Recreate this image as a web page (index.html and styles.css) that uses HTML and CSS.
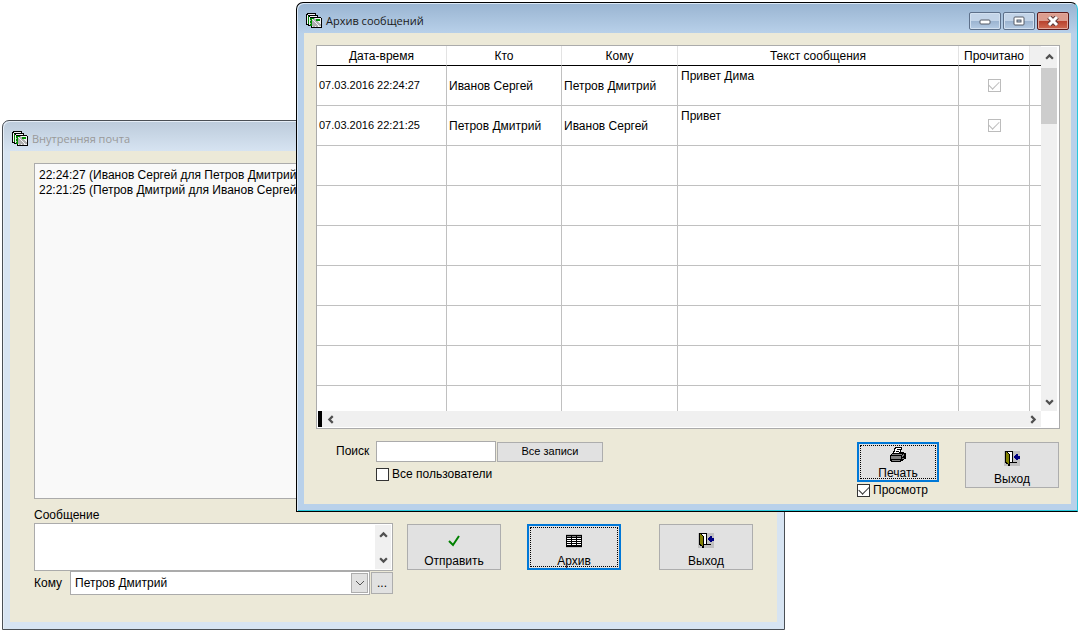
FILE: index.html
```html
<!DOCTYPE html>
<html lang="ru">
<head>
    <meta charset="UTF-8">
    <meta name="viewport" content="width=device-width, initial-scale=1.0">
    <title>Внутренняя почта</title>
    <link rel="stylesheet" href="styles.css">
</head>
<body>
    <!-- Общие иконки -->
    <svg class="sprite" aria-hidden="true">
        <symbol id="i-mail" viewBox="0 0 16 16">
            <path d="M1 0H10V2H12V4H15V5H16V15H5V13H2V12H0V1H1Z" fill="#000"/>
            <path d="M1 2H2V11H1ZM2 1H9V2H2ZM3 4H4V12H3ZM4 3H11V4H4Z" fill="#f4f4f4"/>
            <path d="M2 3H3V11H2ZM4 5H5V13H4Z" fill="#008000"/>
            <path d="M5 5H15V14H6V13H5Z" fill="#f4f4f4"/>
            <path d="M5 7L12 14M8 6L15 13M5 10L9 14M12 10L15 13" stroke="#b0b0b0" stroke-width="2" fill="none"/>
            <path d="M10 6H14V8H10ZM5 5H8V6H5ZM5 6H6V13H5Z" fill="#009000"/>
        </symbol>
        <symbol id="i-exit" viewBox="0 0 16 15">
            <path d="M0 0H16V15H0Z" fill="#c0c0c0"/>
            <path d="M1 0H9V11H13V12H6V15H4V13H2V12H1Z" fill="#000"/>
            <path d="M2 1H3V2H4V3H5V13H4V12H3V11H2Z" fill="#808000"/>
            <path d="M4 1H8V11H6V3H5V2H4Z" fill="#fff"/>
            <path d="M10 5H11V4H12V3H14V5H16V8H14V9H12V8H11V7H10Z" fill="#000080"/>
        </symbol>
        <symbol id="i-printer" viewBox="0 0 18 16">
            <path d="M6 0H13V1L12 5H15V6H17V12H15V13H14V14H12V15H2V14H1V8H2V7H3V6H4Z" fill="#000"/>
            <path d="M7 1H12L10 6H5Z" fill="#fff"/>
            <path d="M8 2H11V3H8ZM7 4H10V5H7Z" fill="#000"/>
            <path d="M3 7H13V8H3ZM2 9H12V12H2Z" fill="#808080"/>
            <path d="M13 8H14V7H15V9H14V10H13ZM13 11H15V12H13ZM3 13H11V14H3Z" fill="#808080"/>
        </symbol>
        <symbol id="i-table" viewBox="0 0 16 14">
            <path d="M0 0H16V14H0Z" fill="#c0c0c0"/>
            <path d="M0 1H16V13H0Z" fill="#000"/>
            <path d="M1 2H5V3H1ZM6 2H10V3H6ZM11 2H15V3H11Z" fill="#808080"/>
            <path d="M1 4H5V5H1ZM6 4H10V5H6ZM11 4H15V5H11ZM1 6H5V7H1ZM6 6H10V7H6ZM11 6H15V7H11ZM1 8H5V9H1ZM6 8H10V9H6ZM11 8H15V9H11ZM1 10H5V11H1ZM6 10H10V11H6ZM11 10H15V11H11Z" fill="#fff"/>
        </symbol>
        <symbol id="i-check" viewBox="0 0 12 12">
            <path d="M1 6L5 10L11 1" fill="none" stroke="#008000" stroke-width="2"/>
        </symbol>
        <symbol id="i-chevron" viewBox="0 0 8 6">
            <path d="M1 5L4 2L7 5" fill="none" stroke="#505050" stroke-width="2"/>
        </symbol>
        <symbol id="i-drop" viewBox="0 0 10 6">
            <path d="M1 1L5 5L9 1" fill="none" stroke="#555"/>
        </symbol>
    </svg>

    <main class="desktop">
        <!-- Окно почты -->
        <section class="window window-mail">
            <header class="titlebar">
                <svg class="app-icon"><use href="#i-mail"/></svg>
                <h1>Внутренняя почта</h1>
            </header>
            <div class="client mail">
                <div class="log">
                    <p>22:24:27 (Иванов Сергей для Петров Дмитрий)</p>
                    <p>22:21:25 (Петров Дмитрий для Иванов Сергей)</p>
                </div>
                <label class="message-label" for="message">Сообщение</label>
                <div class="compose">
                    <div class="fields">
                        <div class="message-box">
                            <textarea id="message"></textarea>
                            <div class="vscroll">
                                <button class="arrow" aria-label="Вверх"><svg><use href="#i-chevron"/></svg></button>
                                <button class="arrow down" aria-label="Вниз"><svg><use href="#i-chevron"/></svg></button>
                            </div>
                        </div>
                        <div class="recipient">
                            <label for="recipient">Кому</label>
                            <div class="select">
                                <select id="recipient">
                                    <option>Петров Дмитрий</option>
                                    <option>Иванов Сергей</option>
                                </select>
                                <span class="drop"><svg><use href="#i-drop"/></svg></span>
                            </div>
                            <button class="btn more">...</button>
                        </div>
                    </div>
                    <div class="actions">
                        <button class="btn big"><svg class="icon-check"><use href="#i-check"/></svg>Отправить</button>
                        <button class="btn big default"><svg class="icon-table"><use href="#i-table"/></svg>Архив</button>
                        <button class="btn big"><svg class="icon-exit"><use href="#i-exit"/></svg>Выход</button>
                    </div>
                </div>
            </div>
        </section>

        <!-- Окно архива -->
        <section class="window window-archive active">
            <header class="titlebar">
                <svg class="app-icon"><use href="#i-mail"/></svg>
                <h1>Архив сообщений</h1>
                <div class="controls">
                    <button aria-label="Свернуть"><svg viewBox="0 0 12 10"><rect x="1" y="4" width="10" height="4" rx="1" fill="#fff" stroke="#555b66"/></svg></button>
                    <button aria-label="Развернуть"><svg viewBox="0 0 12 10"><rect x="1" y="1" width="10" height="8" rx="1" fill="#fff" stroke="#555b66"/><rect x="4" y="4" width="4" height="2" fill="#b3c9e2" stroke="#555b66"/></svg></button>
                    <button class="close" aria-label="Закрыть"><svg viewBox="0 0 12 10"><path d="M2 1L10 9M10 1L2 9" stroke="#5f3a3a" stroke-width="5"/><path d="M2 1L10 9M10 1L2 9" stroke="#fff" stroke-width="3"/></svg></button>
                </div>
            </header>
            <div class="client archive">
                <div class="grid">
                    <table>
                        <colgroup>
                            <col class="c-date"><col class="c-from"><col class="c-to"><col><col class="c-read"><col class="c-rest">
                        </colgroup>
                        <thead>
                            <tr><th>Дата-время</th><th>Кто</th><th>Кому</th><th>Текст сообщения</th><th>Прочитано</th><td class="filler"></td></tr>
                        </thead>
                        <tbody>
                            <tr><td class="date">07.03.2016 22:24:27</td><td>Иванов Сергей</td><td>Петров Дмитрий</td><td class="text">Привет Дима</td><td class="read"><input type="checkbox" aria-label="Прочитано" checked disabled></td><td></td></tr>
                            <tr><td class="date">07.03.2016 22:21:25</td><td>Петров Дмитрий</td><td>Иванов Сергей</td><td class="text">Привет</td><td class="read"><input type="checkbox" aria-label="Прочитано" checked disabled></td><td></td></tr>
                            <tr><td></td><td></td><td></td><td></td><td></td><td></td></tr>
                            <tr><td></td><td></td><td></td><td></td><td></td><td></td></tr>
                            <tr><td></td><td></td><td></td><td></td><td></td><td></td></tr>
                            <tr><td></td><td></td><td></td><td></td><td></td><td></td></tr>
                            <tr><td></td><td></td><td></td><td></td><td></td><td></td></tr>
                            <tr><td></td><td></td><td></td><td></td><td></td><td></td></tr>
                            <tr class="partial"><td></td><td></td><td></td><td></td><td></td><td></td></tr>
                        </tbody>
                    </table>
                    <div class="vscroll">
                        <button class="arrow" aria-label="Вверх"><svg><use href="#i-chevron"/></svg></button>
                        <div class="track"><div class="thumb"></div></div>
                        <button class="arrow down" aria-label="Вниз"><svg><use href="#i-chevron"/></svg></button>
                    </div>
                    <div class="hscroll">
                        <span class="splitter"></span>
                        <button class="arrow left" aria-label="Влево"><svg><use href="#i-chevron"/></svg></button>
                        <button class="arrow right" aria-label="Вправо"><svg><use href="#i-chevron"/></svg></button>
                    </div>
                </div>
                <footer class="tools">
                    <div class="search">
                        <label for="search">Поиск</label>
                        <input type="text" id="search">
                        <button class="btn all">Все записи</button>
                        <label class="check all-users"><input type="checkbox">Все пользователи</label>
                    </div>
                    <div class="print">
                        <button class="btn big default"><svg class="icon-printer"><use href="#i-printer"/></svg>Печать</button>
                        <label class="check"><input type="checkbox" checked>Просмотр</label>
                    </div>
                    <button class="btn big"><svg class="icon-exit"><use href="#i-exit"/></svg>Выход</button>
                </footer>
            </div>
        </section>
    </main>
</body>
</html>
```
FILE: styles.css
```css
* {
    box-sizing: border-box;
}

body {
    margin: 0;
    background: #fff;
    color: #000;
    font: 12px/15px "Liberation Sans", Arial, sans-serif;
}

button, input, select, textarea {
    margin: 0;
    padding: 0;
    border: 0;
    border-radius: 0;
    color: inherit;
    font: inherit;
}

svg {
    display: block;
    shape-rendering: crispEdges;
}

.sprite {
    position: absolute;
    width: 0;
    height: 0;
}

.desktop {
    position: relative;
    min-height: 100vh;
    overflow: hidden;
}

/* Окна */
.window {
    position: absolute;
    padding: 0 7px 7px;
    border: 1px solid #4a4f55;
    border-radius: 7px 7px 0 0;
    background: linear-gradient(#bccbdb, #d7e4f2 31px);
    box-shadow: inset 1px 1px #e6eef7;
}

.window-mail {
    top: 120px;
    left: 2px;
    right: 293px;
}

.window-archive {
    top: 2px;
    left: 296px;
    right: 0;
}

.window.active {
    padding-right: 6px;
    border-color: #000;
    border-right-color: #28c8dc;
    background: linear-gradient(#99b4d1, #b9d1ea 31px);
    box-shadow: inset 1px 1px #dce9f6, inset 0 -1px #28c8dc;
}

.titlebar {
    display: flex;
    align-items: center;
    height: 30px;
    padding: 6px 2px 0 2px;
    color: #999;
}

.active .titlebar {
    color: #1a1a1a;
}

.titlebar h1 {
    flex: 1;
    margin: 0 0 0 4px;
    font: 11px/16px "Open Sans", "Noto Sans", sans-serif;
}

.app-icon {
    width: 16px;
    height: 16px;
}

.controls {
    display: flex;
    gap: 2px;
}

.controls button {
    display: grid;
    place-items: center;
    width: 32px;
    height: 18px;
    border: 1px solid #5d708a;
    border-radius: 2px;
    background: linear-gradient(#c3d4e8 50%, #9bb3d0 50%, #b5cbe4);
    box-shadow: inset 0 0 0 1px #d2e0f0;
}

.controls .close {
    border-color: #5b1a1a;
    background: linear-gradient(#dc9c8e 50%, #b8412d 50%, #cf6a52);
    box-shadow: inset 0 0 0 1px #e3a99d;
}

.controls svg {
    width: 12px;
    height: 10px;
    shape-rendering: auto;
}

.client {
    background: #ece9d8;
}

/* Кнопки и поля */
.btn {
    border: 1px solid #adadad;
    background: #e1e1e1;
}

.btn.big {
    display: flex;
    flex-direction: column;
    align-items: center;
    justify-content: flex-end;
    width: 94px;
    height: 46px;
    padding-bottom: 1px;
    line-height: 13px;
}

.btn.default {
    border: 2px solid #0078d7;
    padding-bottom: 0;
    outline: 1px dotted #000;
    outline-offset: -4px;
}

.icon-check {
    width: 12px;
    height: 12px;
    margin-bottom: 8px;
    shape-rendering: auto;
}

.icon-table {
    width: 16px;
    height: 14px;
    margin-bottom: 7px;
}

.icon-exit {
    width: 16px;
    height: 15px;
    margin-bottom: 7px;
}

.icon-printer {
    width: 18px;
    height: 16px;
    margin-bottom: 4px;
}

input[type=checkbox] {
    appearance: none;
    display: grid;
    place-items: center;
    width: 13px;
    height: 13px;
    border: 1px solid #333;
    background: #fff;
}

input[type=checkbox]:checked::after {
    content: "";
    width: 9px;
    height: 5px;
    margin-bottom: 3px;
    border: solid #333;
    border-width: 0 0 1px 1px;
    transform: rotate(-45deg);
}

input[type=checkbox]:disabled,
input[type=checkbox]:disabled::after {
    border-color: #bcbcbc;
}

.check {
    display: flex;
    align-items: center;
    gap: 3px;
}

/* Полосы прокрутки */
.vscroll {
    display: flex;
    flex-direction: column;
    justify-content: space-between;
    width: 16px;
    background: #f0f0f0;
}

.arrow {
    display: grid;
    place-items: center;
    width: 16px;
    height: 18px;
    background: none;
}

.arrow svg {
    width: 9px;
    height: 7px;
    shape-rendering: auto;
}

.arrow.down svg {
    transform: rotate(180deg);
}

.arrow.left svg {
    transform: rotate(-90deg);
}

.arrow.right svg {
    transform: rotate(90deg);
}

/* Почта */
.mail {
    padding: 12px 24px 27px;
}

.log {
    height: 336px;
    padding: 4px;
    border: 1px solid #ababab;
    background: #f9f9f9;
}

.log p {
    margin: 0;
}

.message-label {
    display: block;
    margin-top: 9px;
}

.compose {
    display: flex;
    gap: 14px;
}

.fields {
    flex: 1;
}

.message-box {
    display: flex;
    height: 48px;
    padding: 1px;
    border: 1px solid #ababab;
    background: #fff;
}

.message-box textarea {
    flex: 1;
    min-width: 0;
    resize: none;
    outline: 0;
}

.recipient {
    display: flex;
    align-items: center;
}

.recipient label {
    width: 36px;
}

.select {
    position: relative;
    flex: 1;
}

.select select {
    display: block;
    width: 100%;
    height: 24px;
    padding-left: 4px;
    appearance: none;
    border: 1px solid #ababab;
    background: #fff;
}

.drop {
    position: absolute;
    top: 2px;
    right: 2px;
    display: grid;
    place-items: center;
    width: 17px;
    height: 20px;
    border: 1px solid #adadad;
    background: #e1e1e1;
    pointer-events: none;
}

.drop svg {
    width: 10px;
    height: 6px;
    shape-rendering: auto;
}

.more {
    width: 22px;
    height: 22px;
    margin-left: 1px;
}

.actions {
    display: flex;
    gap: 26px;
    padding-top: 1px;
}

.actions .btn:last-child {
    margin-left: 12px;
}

/* Архив */
.archive {
    padding: 12px 11px 6px 12px;
}

.grid {
    display: grid;
    grid-template-columns: 1fr 18px;
    border: 1px solid #ababab;
    background: #fff;
}

.grid .vscroll {
    margin-top: 1px;
}

.track {
    flex: 1;
    padding-top: 3px;
}

.thumb {
    height: 56px;
    background: #cdcdcd;
}

table {
    width: 100%;
    table-layout: fixed;
    border-collapse: separate;
    border-spacing: 0;
}

.c-date { width: 130px; }
.c-from { width: 115px; }
.c-to { width: 116px; }
.c-read { width: 71px; }
.c-rest { width: 11px; }

th, td {
    padding: 2px 2px 0;
    border-right: 1px solid #c0c0c0;
    border-bottom: 1px solid #c0c0c0;
    text-align: left;
    white-space: nowrap;
}

th, .filler {
    height: 20px;
    border-right-color: #e3e3e3;
    border-bottom-color: #000;
    font-weight: normal;
    text-align: center;
}

.filler {
    background: #f0f0f0;
}

tr > :last-child {
    border-right: 0;
}

tbody td {
    height: 40px;
}

.date {
    padding-top: 0;
    font-size: 11px;
}

.text {
    padding: 3px;
    vertical-align: top;
}

.read {
    padding-top: 0;
}

.read input {
    margin: 0 auto;
}

.partial td {
    height: 25px;
    border-bottom: 0;
}

.hscroll {
    display: flex;
    align-items: center;
    height: 16px;
    margin: 0 0 1px 1px;
    background: #f0f0f0;
}

.splitter {
    width: 4px;
    height: 16px;
    background: #000;
}

.hscroll .arrow {
    height: 16px;
}

.hscroll .right {
    margin-left: auto;
}

.tools {
    display: flex;
    align-items: flex-start;
    margin: 12px 1px 0 20px;
}

.search {
    display: grid;
    grid-template-columns: 39px 120px 106px;
    column-gap: 1px;
    align-items: center;
    margin-right: auto;
}

.search input[type=text] {
    width: 120px;
    height: 21px;
    border: 1px solid #ababab;
    background: #fff;
}

.all {
    height: 20px;
    font-size: 11px;
}

.all-users {
    grid-column: 2 / 4;
    margin-top: 5px;
}

.print {
    margin: 1px 26px 0 0;
}

.print .btn {
    width: 82px;
    height: 40px;
}

.print .check {
    margin-top: 1px;
}

.tools > .btn {
    margin-top: 1px;
}
```
